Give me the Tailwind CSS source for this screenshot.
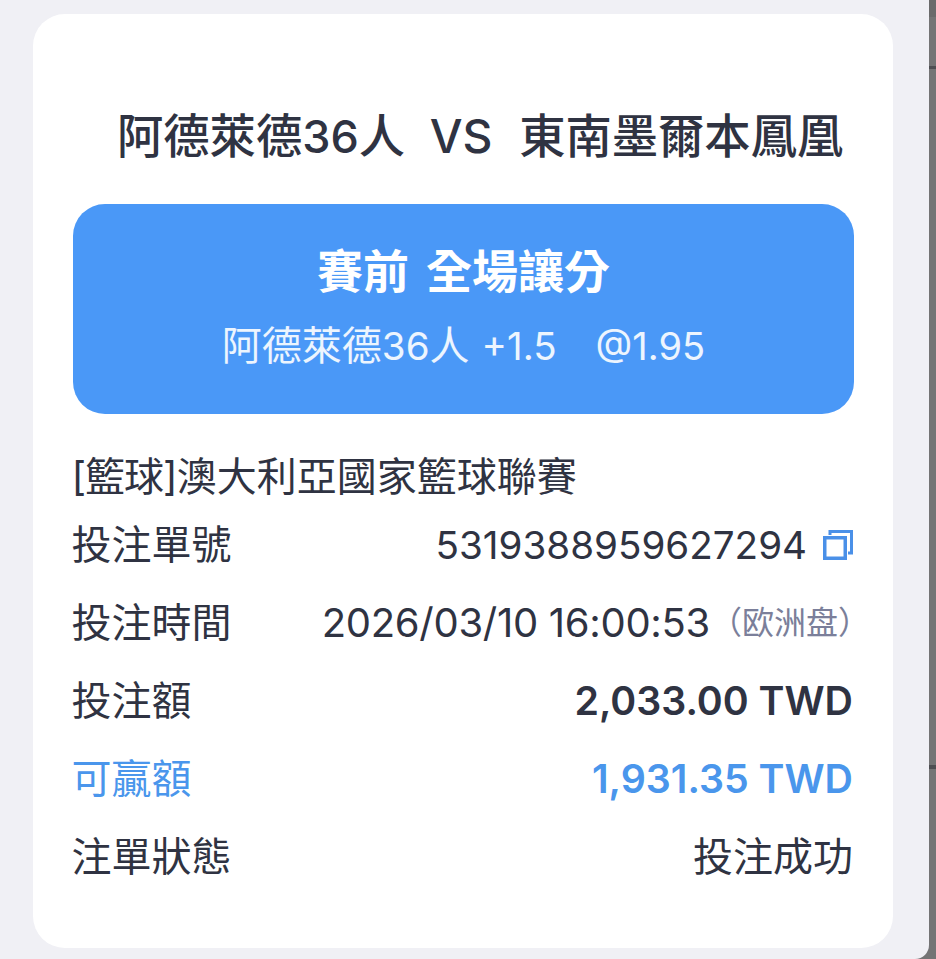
<!DOCTYPE html>
<html lang="zh-Hant">
<head>
<meta charset="UTF-8">
<title>注單詳情</title>
<script src="https://cdn.jsdelivr.net/npm/@tailwindcss/browser@4"></script>
</head>
<body class="flex w-[936px] h-[959px] overflow-hidden bg-[#747475] font-['Inter','Noto_Sans_CJK_TC',sans-serif]">
    <div class="shrink-0 w-[929px] h-[959px] pl-[33px] pt-[14px] bg-[#f0f0f5] rounded-br-[14px]">
        <div class="w-[860px] h-[934px] pl-[40px] pr-[39px] bg-white rounded-[32px]">
            <h1 class="pt-[94px] pl-[44px] h-[190px] text-[46.3px] leading-[56px] font-medium text-[#2f3342] whitespace-pre">阿德萊德<span class="text-[45px]">36</span>人  VS  <span class="ml-[2px]">東南墨爾本鳳凰</span></h1>
            <div class="h-[210px] rounded-[32px] bg-[#4a98f7] text-white flex flex-col items-center pt-[38px]">
                <div class="text-[46px] leading-[58px] font-semibold flex gap-[17px]"><span>賽前</span><span>全場讓分</span></div>
                <div class="mt-[22px] text-[40px] leading-[48px] text-white/90 flex">
                    <span>阿德萊德<span class="text-[38.5px]">36</span>人</span>
                    <span class="ml-[12px] text-[38.5px]">+1.5</span>
                    <span class="ml-[39px] text-[38px]">@1.95</span>
                </div>
            </div>
            <div class="-ml-[1.5px] mt-[40px] text-[40px] leading-[46px] text-[#2f3342]"><span class="tracking-[-1px]">[籃球]</span>澳大利亞國家籃球聯賽</div>
            <div class="-ml-[1.5px] mr-[1px] mt-[21px] flex flex-col gap-[30px] text-[40px] leading-[48px] text-[#2f3342]">
                <div class="flex justify-between items-center">
                    <span>投注單號</span>
                    <span class="flex items-center gap-[16px] text-[38.6px]">5319388959627294
                        <svg class="w-[30px] h-[30px]" viewBox="0 0 30 30" fill="none" stroke="#4a90e8">
                            <rect x="1.75" y="7.75" width="20.5" height="20.5" stroke-width="3.5"/>
                            <path d="M7 5V1.5h21.5V23H25" stroke-width="3"/>
                        </svg>
                    </span>
                </div>
                <div class="flex justify-between items-center">
                    <span>投注時間</span>
                    <span class="flex items-center -mr-[17px]"><span class="tracking-[-0.3px]">2026/03/10 16:00:53</span><span class="text-[32px] text-[#7b7f9a]">（欧洲盘）</span></span>
                </div>
                <div class="flex justify-between items-center">
                    <span>投注額</span>
                    <span class="font-semibold text-[39.3px]">2,033.00 TWD</span>
                </div>
                <div class="flex justify-between items-center text-[#4a96ec]">
                    <span>可贏額</span>
                    <span class="font-semibold text-[39.3px]">1,931.35 TWD</span>
                </div>
                <div class="flex justify-between items-center">
                    <span>注單狀態</span>
                    <span>投注成功</span>
                </div>
            </div>
        </div>
    </div>
    <div class="flex-1 flex flex-col">
        <div class="h-[17px] bg-[#6a6a6b]"></div>
        <div class="mt-[49px] h-[3px] bg-[#4e4e52]"></div>
        <div class="mt-[696px] h-[4px] bg-[#4e4e52]"></div>
    </div>
</body>
</html>
